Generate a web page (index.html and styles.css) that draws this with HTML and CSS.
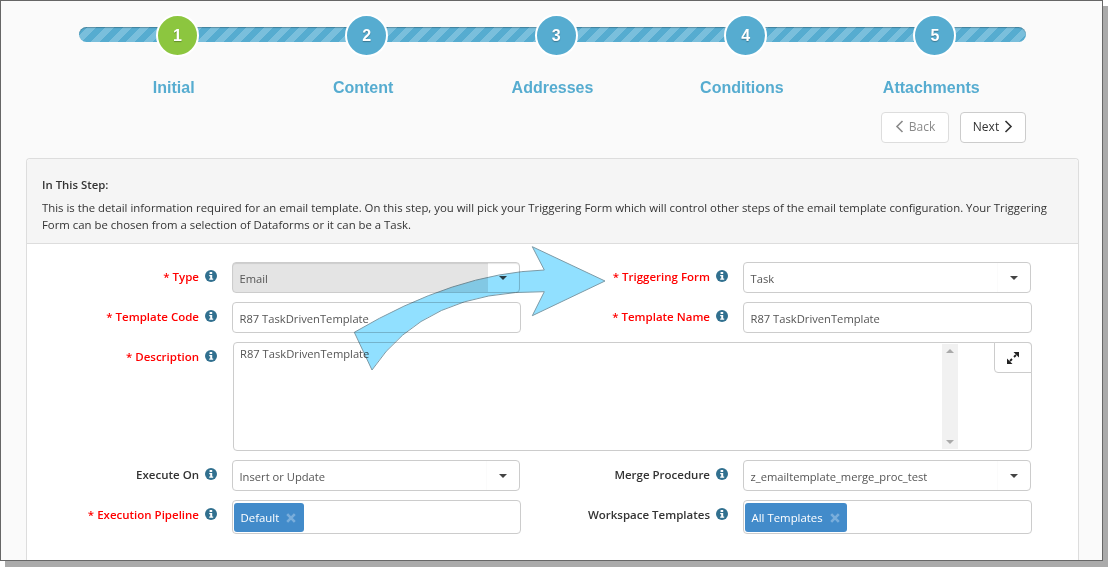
FILE: index.html
```html
<!DOCTYPE html>
<html lang="en">
<head>
<meta charset="utf-8">
<title>Email Template</title>
<link rel="stylesheet" href="styles.css">
</head>
<body>
<svg width="0" height="0" class="defs"><defs>
<symbol id="info" viewBox="0 0 12 12"><circle cx="6" cy="6" r="6" fill="#31708f"/><rect x="4.6" y="2" width="2.6" height="2" fill="#fff"/><path d="M4.2 5h3v3.6h1v1.2H4.2V8.6h1V6.2h-1z" fill="#fff"/></symbol>
<symbol id="chipx" viewBox="0 0 10 10"><path d="M1.2 1.2l7.6 7.6M8.8 1.2l-7.6 7.6" fill="none" stroke="#7aaedb" stroke-width="2.6"/></symbol>
</defs></svg>
<div class="window">
  <div class="stepper">
    <div class="track"></div>
    <div class="step active"><span class="dot">1</span><span class="step-label">Initial</span></div>
    <div class="step"><span class="dot">2</span><span class="step-label">Content</span></div>
    <div class="step"><span class="dot">3</span><span class="step-label">Addresses</span></div>
    <div class="step"><span class="dot">4</span><span class="step-label">Conditions</span></div>
    <div class="step"><span class="dot">5</span><span class="step-label">Attachments</span></div>
  </div>
  <div class="nav">
    <button class="btn btn-disabled"><svg width="9" height="13" viewBox="0 0 9 13"><path d="M7.5 1 2 6.5 7.5 12" fill="none" stroke="#8a8a8a" stroke-width="1.6"/></svg>Back</button>
    <button class="btn btn-next">Next<svg width="9" height="13" viewBox="0 0 9 13"><path d="M1.5 1 7 6.5 1.5 12" fill="none" stroke="#333" stroke-width="1.6"/></svg></button>
  </div>
  <div class="panel">
    <div class="panel-head">
      <div class="head-title">In This Step:</div>
      <p class="head-text">This is the detail information required for an email template. On this step, you will pick your Triggering Form which will control other steps of the email template configuration. Your Triggering<br>Form can be chosen from a selection of Dataforms or it can be a Task.</p>
    </div>
    <div class="form">
      <div class="label req"><span>* Type</span><svg class="info"><use href="#info"/></svg></div>
      <div class="select disabled"><span class="value">Email</span><span class="caret-box"><i class="caret"></i></span></div>
      <div class="label req"><span>* Triggering Form</span><svg class="info"><use href="#info"/></svg></div>
      <div class="select"><span class="value">Task</span><span class="caret-box"><i class="caret"></i></span></div>

      <div class="label req"><span>* Template Code</span><svg class="info"><use href="#info"/></svg></div>
      <div class="input">R87 TaskDrivenTemplate</div>
      <div class="label req"><span>* Template Name</span><svg class="info"><use href="#info"/></svg></div>
      <div class="input wide">R87 TaskDrivenTemplate</div>

      <div class="label req"><span>* Description</span><svg class="info"><use href="#info"/></svg></div>
      <div class="textarea">
        <div class="ta-text">R87 TaskDrivenTemplate</div>
        <div class="scrollbar"><i class="sb-up"></i><i class="sb-down"></i></div>
        <div class="expand"><svg width="12" height="12" viewBox="0 0 12 12"><path d="M6.5 0H12v5.500zM0 12V6.500L5.500 12z" fill="#222"/><path d="M9 3 7 5M3 9l2-2" fill="none" stroke="#222" stroke-width="1.8"/></svg></div>
      </div>

      <div class="label"><span>Execute On</span><svg class="info"><use href="#info"/></svg></div>
      <div class="select"><span class="value">Insert or Update</span><span class="caret-box"><i class="caret"></i></span></div>
      <div class="label"><span>Merge Procedure</span><svg class="info"><use href="#info"/></svg></div>
      <div class="select"><span class="value">z_emailtemplate_merge_proc_test</span><span class="caret-box"><i class="caret"></i></span></div>

      <div class="label req"><span>* Execution Pipeline</span><svg class="info"><use href="#info"/></svg></div>
      <div class="tags"><span class="chip">Default<svg class="chip-x"><use href="#chipx"/></svg></span></div>
      <div class="label"><span>Workspace Templates</span><svg class="info"><use href="#info"/></svg></div>
      <div class="tags wide"><span class="chip">All Templates<svg class="chip-x"><use href="#chipx"/></svg></span></div>
    </div>
  </div>
  <svg class="arrow" width="1108" height="567" viewBox="0 0 1108 567"><path d="M605 281 532.3 246.7 544.3 270Q455 273 354.3 332.3L372 370Q425 290 544.3 291.7L532.3 315.7Z"/></svg>
</div>
</body>
</html>
```
FILE: styles.css
```css
* { box-sizing: border-box; }
html, body { margin: 0; padding: 0; height: 567px; overflow: hidden; background: #fff; }
body { font-family: "Open Sans", "Liberation Sans", sans-serif; font-size: 11.2px; color: #333; }
.defs { position: absolute; }
.window {
  position: relative;
  width: 1103px;
  height: 561px;
  border: 1px solid #666;
  background: #fafafa;
  box-shadow: 5px 6px 0 #aaa;
  padding: 0 23px 0 25px;
  display: flex;
  flex-direction: column;
}
.stepper {
  position: relative;
  display: grid;
  grid-template-columns: repeat(5, 1fr);
  margin: 13px 53px 0 53px;
}
.track {
  position: absolute;
  left: 0; right: 0; top: 13px;
  height: 15px;
  border-radius: 8px;
  background: repeating-linear-gradient(135deg, #56acd0 0 6.25px, #7abfdc 6.25px 12.5px);
  box-shadow: inset 0 1px 1px rgba(0,0,0,.25);
}
.step { display: flex; flex-direction: column; align-items: center; position: relative; }
.dot {
  width: 43px; height: 43px;
  margin-left: 7.4px;
  border-radius: 50%;
  border: 2px solid #fff;
  background: #56acd0;
  color: #fff;
  font: bold 16px/39px "Liberation Sans", sans-serif;
  text-align: center;
  text-shadow: 0 1px 1px rgba(0,0,0,.3);
}
.active .dot { background: #8cc63f; }
.step-label {
  margin-top: 21px;
  font: bold 16px/20px "Liberation Sans", sans-serif;
  color: #56acd0;
}
.nav { display: flex; justify-content: flex-end; gap: 11px; margin: 14px 53px 0 0; }
.btn {
  height: 31px;
  background: #fff;
  border: 1px solid #ccc;
  border-radius: 4px;
  font: inherit;
  font-size: 12px;
  color: #333;
  display: flex; align-items: center; justify-content: center; gap: 5px;
  padding: 0 0 2px;
}
.btn-disabled { width: 68px; border-color: #ddd; color: #8a8a8a; }
.btn-next { width: 66px; }
.panel {
  margin-top: 15px;
  flex: 1;
  background: #fff;
  border: 1px solid #ddd;
  border-bottom: 0;
  border-radius: 4px 4px 0 0;
}
.panel-head {
  height: 85px;
  background: #f5f5f5;
  border-bottom: 1px solid #ddd;
  padding: 18px 15px 0;
  border-radius: 4px 4px 0 0;
  font-size: 11.37px;
}
.head-title { font-weight: 600; line-height: 16px; }
.head-text { margin: 6px 0 0; line-height: 17px; }
.form {
  display: grid;
  grid-template-columns: 205px 289px 222px 289px;
  grid-template-rows: 31px 31px 109px 31px 34px;
  row-gap: 9px;
  padding-top: 18px;
}
.label {
  display: flex; justify-content: flex-end; align-items: flex-start; gap: 6px;
  padding: 7px 15px 0 0;
  font-weight: 600;
  font-size: 11.5px;
  line-height: 16px;
  color: #333;
}
.label.req { color: #f00; }
.info { width: 12px; height: 12px; margin-top: 1px; }
.select, .input, .textarea, .tags {
  background: #fff;
  border: 1px solid #ccc;
  border-radius: 4px;
  color: #555;
}
.select { display: flex; align-items: center; padding-left: 6.5px; width: 288px; }
.value { flex: 1; padding-top: 2px; }
.caret-box { width: 33px; height: 100%; display: flex; align-items: center; justify-content: center; border-left: 1px solid #fbfbfb; }
.caret { width: 0; height: 0; border: 4px solid transparent; border-top-color: #444; border-bottom: 0; }
.disabled { background: linear-gradient(90deg, #e4e4e4 0 255px, #fff 255px); box-shadow: inset 0 1px 1px rgba(0,0,0,.1); }
.disabled .caret-box { border-left: 0; }
.input { padding: 2px 7px 0 6.5px; display: flex; align-items: center; }
.input.wide, .tags.wide { width: 289px; }
.textarea { grid-column: 2 / 5; position: relative; display: flex; padding-right: 73px; margin-left: 1px; height: 109px; }
.ta-text { flex: 1; padding: 3px 6px; line-height: 16px; }
.scrollbar { width: 16px; background: #f1f1f1; position: relative; margin: 1px 0; }
.sb-up, .sb-down { position: absolute; left: 4px; width: 0; height: 0; border: 4px solid transparent; }
.sb-up { top: 5px; border-top: 0; border-bottom-color: #aaa; }
.sb-down { bottom: 5px; border-bottom: 0; border-top-color: #aaa; }
.expand {
  position: absolute; top: -1px; right: -1px;
  width: 38px; height: 31px;
  border: 1px solid #ccc;
  border-radius: 0 4px 0 4px;
  background: #fff;
  display: flex; align-items: center; justify-content: center;
}
.tags { padding: 2px 1px; display: flex; align-items: flex-start; }
.chip {
  height: 29px;
  background: #428bca;
  color: #fff;
  border-radius: 3px;
  padding: 0 7.500px 0 6.500px;
  display: flex; align-items: center; gap: 7px;
  font-size: 11.4px;
}
.chip-x { width: 10px; height: 10px; margin-top: 1px; }
.arrow { position: absolute; left: -1px; top: -1px; pointer-events: none; }
.arrow path { fill: #91e0ff; stroke: #7d9aa6; stroke-width: 1; mix-blend-mode: multiply; }
```
